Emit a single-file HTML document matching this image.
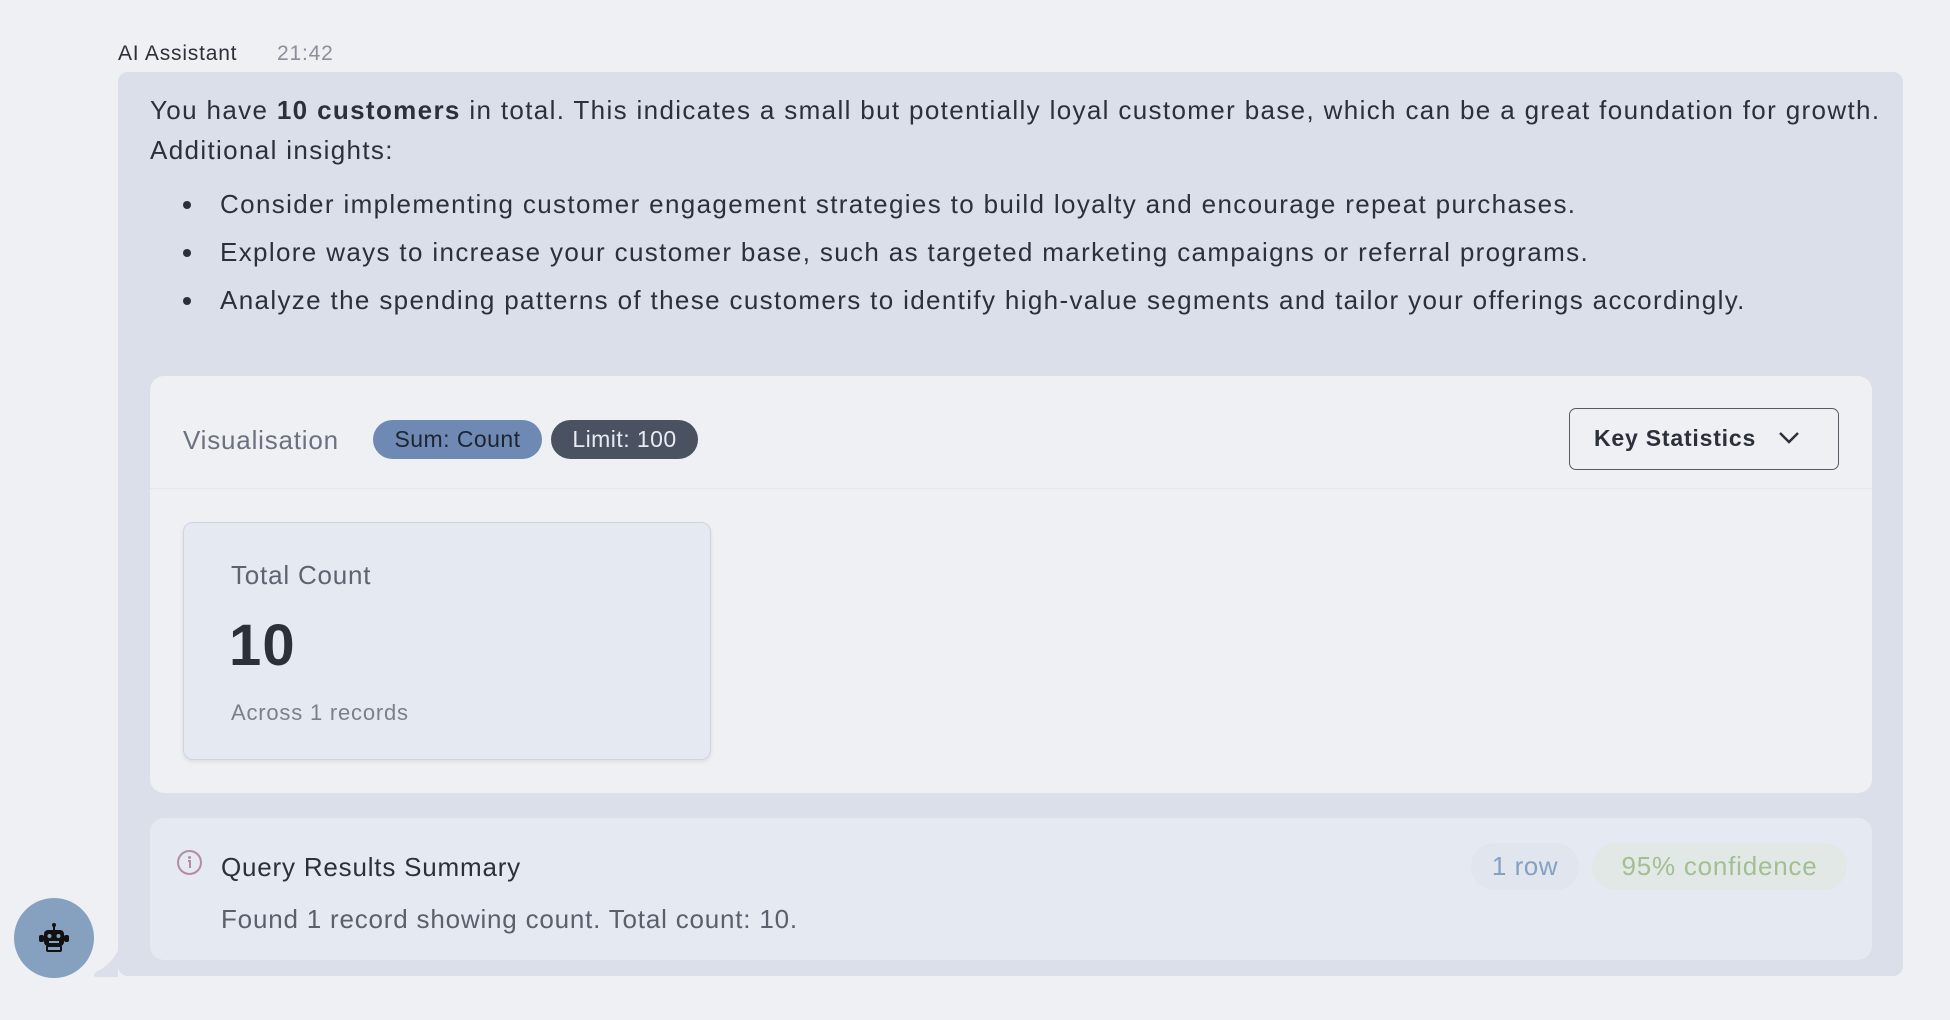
<!DOCTYPE html>
<html><head><style>
*{margin:0;padding:0;box-sizing:border-box}
body{width:1950px;height:1020px;background:#eef0f4;font-family:"Liberation Sans",sans-serif;color:#2b303b;position:relative;overflow:hidden;letter-spacing:0.05em}
.abs{position:absolute}
.bubble{left:118px;top:72px;width:1785px;height:904px;background:#dadfe9;border-radius:10px}
.main{left:150px;top:90px;font-size:26px;line-height:40px;width:1750px;letter-spacing:0.052em}
ul{list-style:none}
li{position:relative;padding-left:70px;height:48px;line-height:48px}
li:before{content:"";position:absolute;left:33px;top:21px;width:8px;height:8px;border-radius:50%;background:#2b303b}
.viz{left:150px;top:376px;width:1722px;height:417px;background:#eef0f4;border-radius:14px}
.pill{position:absolute;top:420px;height:39px;border-radius:20px;font-size:23px;line-height:39px;text-align:center;letter-spacing:0.02em}
.sum{left:150px;top:818px;width:1722px;height:142px;background:#e5e9f1;border-radius:14px}
</style></head><body>
<div class="abs" style="left:118px;top:42px;font-size:21px;color:#2b303b">AI Assistant</div>
<div class="abs" style="left:277px;top:42px;font-size:21px;color:#8a8f99">21:42</div>
<div class="abs bubble"></div>
<svg class="abs" style="left:90px;top:950px" width="40" height="28"><path d="M28 0 L28 27 L6 27 Q2 26 6 22 Q22 14 28 0Z" fill="#dadfe9"/></svg>
<div class="abs main">You have <b>10 customers</b> in total. This indicates a small but potentially loyal customer base, which can be a great foundation for growth. Additional insights:
<ul style="margin-top:10px">
<li>Consider implementing customer engagement strategies to build loyalty and encourage repeat purchases.</li>
<li>Explore ways to increase your customer base, such as targeted marketing campaigns or referral programs.</li>
<li>Analyze the spending patterns of these customers to identify high-value segments and tailor your offerings accordingly.</li>
</ul></div>
<div class="abs viz"></div>
<div class="abs" style="left:150px;top:488px;width:1722px;height:1px;background:#e4e7ec"></div>
<div class="abs" style="left:183px;top:425px;font-size:26px;color:#6b7180">Visualisation</div>
<div class="pill" style="left:373px;width:169px;background:#6e89b3;color:#1e2430">Sum: Count</div>
<div class="pill" style="left:551px;width:147px;background:#4a5160;color:#e8ebf0">Limit: 100</div>
<div class="abs" style="left:1569px;top:408px;width:270px;height:62px;border:1.5px solid #555b66;border-radius:7px;font-size:23px;font-weight:bold;line-height:59px;padding-left:24px;color:#2b303b">Key Statistics
<svg class="abs" style="right:38px;top:22px" width="22" height="14"><path d="M2 2 L11 11 L20 2" fill="none" stroke="#2b303b" stroke-width="2.5"/></svg></div>
<div class="abs" style="left:183px;top:522px;width:528px;height:238px;background:#e5e9f1;border:1.5px solid #cfd5e0;border-radius:10px;box-shadow:0 2px 4px rgba(0,0,0,.08)"></div>
<div class="abs" style="left:231px;top:560px;font-size:26px;color:#5d6370">Total Count</div>
<div class="abs" style="left:229px;top:612px;font-size:58px;font-weight:bold;color:#2b303b;letter-spacing:0.02em">10</div>
<div class="abs" style="left:231px;top:700px;font-size:22px;color:#7a808c">Across 1 records</div>
<div class="abs sum"></div>
<svg class="abs" style="left:176px;top:849px" width="27" height="27"><circle cx="13.5" cy="13.5" r="11.5" fill="none" stroke="#b68aa6" stroke-width="2"/><circle cx="13.5" cy="8.5" r="1.5" fill="#b68aa6"/><path d="M12 12 h2 v7" stroke="#b68aa6" stroke-width="2" fill="none"/></svg>
<div class="abs" style="left:221px;top:852px;font-size:26px;color:#2b303b">Query Results Summary</div>
<div class="abs" style="left:221px;top:904px;font-size:26px;color:#5a606c">Found 1 record showing count. Total count: 10.</div>
<div class="abs" style="left:1471px;top:843px;width:108px;height:47px;border-radius:24px;background:#e1e6ee;color:#86a0c2;font-size:26px;line-height:47px;text-align:center;letter-spacing:0.02em">1 row</div>
<div class="abs" style="left:1592px;top:843px;width:255px;height:47px;border-radius:24px;background:#e2e8e6;color:#a3bf92;font-size:26px;line-height:47px;text-align:center;letter-spacing:0.03em">95% confidence</div>
<div class="abs" style="left:14px;top:898px;width:80px;height:80px;border-radius:50%;background:#86a1bf"></div>
<svg class="abs" style="left:36px;top:922px" width="36" height="32" viewBox="0 0 36 32"><circle cx="18" cy="3" r="2" fill="#111"/><path d="M18 4v4" stroke="#111" stroke-width="2"/><rect x="8" y="8" width="20" height="16" rx="4" fill="#111"/><rect x="3" y="13" width="5" height="7" rx="2" fill="#111"/><rect x="28" y="13" width="5" height="7" rx="2" fill="#111"/><circle cx="13.5" cy="14" r="2" fill="#86a1bf"/><circle cx="22.5" cy="14" r="2" fill="#86a1bf"/><rect x="13" y="19" width="10" height="2" fill="#86a1bf"/><rect x="11" y="24" width="14" height="5" rx="1" fill="none" stroke="#111" stroke-width="2"/></svg>
</body></html>
